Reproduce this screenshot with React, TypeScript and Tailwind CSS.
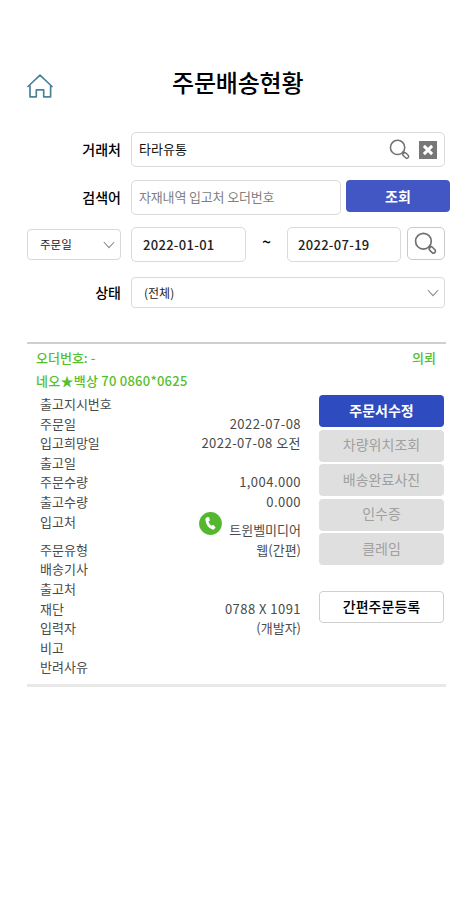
import React from 'react';
import clsx from 'clsx';

interface DetailRow {
  label: string;
  value?: string;
  numeric?: boolean;
  phone?: boolean;
}

const rows: DetailRow[] = [
  { label: '출고지시번호' },
  { label: '주문일', value: '2022-07-08', numeric: true },
  { label: '입고희망일', value: '2022-07-08 오전', numeric: true },
  { label: '출고일' },
  { label: '주문수량', value: '1,004.000', numeric: true },
  { label: '출고수량', value: '0.000', numeric: true },
  { label: '입고처', value: '트윈벨미디어', phone: true },
  { label: '주문유형', value: '웹(간편)' },
  { label: '배송기사' },
  { label: '출고처' },
  { label: '재단', value: '0788 X 1091', numeric: true },
  { label: '입력자', value: '(개발자)' },
  { label: '비고' },
  { label: '반려사유' },
];

const disabledActions = ['차량위치조회', '배송완료사진', '인수증', '클레임'];

const HomeIcon = () => (
  <svg className="w-[26px] h-[24px]" viewBox="0 0 26 24" fill="none" stroke="#4b839c" strokeWidth="1.7" strokeLinejoin="round" strokeLinecap="round">
    <path d="M1 12.5 13 1.2 25 12.5M3 11.5V22.8H9.3V15.8H16.7V22.8H23.6V11.5" />
  </svg>
);

const SearchIcon = ({ className }: { className: string }) => (
  <svg className={className} viewBox="0 0 22 22" fill="none" stroke="#707070" strokeLinecap="round">
    <circle cx="9" cy="8.8" r="7.5" strokeWidth="1.6" />
    <path d="M14.4 14 15.4 15" strokeWidth="1.7" />
    <rect x="-3.4" y="-1.9" width="6.8" height="3.8" rx="1.7" strokeWidth="1.5" transform="translate(17.5 17.2) rotate(45)" />
  </svg>
);

const ChevronIcon = () => (
  <svg className="w-[12px] h-[8px]" viewBox="0 0 12 8" fill="none" stroke="#8c8c8c" strokeWidth="1.1">
    <path d="M.8 1 6 6.6 11.2 1" />
  </svg>
);

const PhoneIcon = () => (
  <svg className="w-[23px] h-[23px]" viewBox="0 0 23 23">
    <circle cx="11.5" cy="11.5" r="11.4" fill="#55b72f" />
    <path
      d="M7.4 5.4 9.3 4.9Q9.9 4.8 10.1 5.4L10.9 8Q11 8.6 10.5 8.9L9.4 9.6Q10.2 12.2 12.3 13.7L13.5 13Q14 12.8 14.4 13.1L16.2 15Q16.6 15.5 16.2 16L15 17.3Q14.5 17.8 13.6 17.6Q7.4 15.6 6.4 8Q6.2 6 7.4 5.4Z"
      fill="#fff"
    />
  </svg>
);

const FieldLabel = ({ children }: { children: React.ReactNode }) => (
  <span className="mb-[2px] w-[94px] shrink-0 text-right text-[14px] font-medium leading-5">{children}</span>
);

export default function App() {
  return (
    <div className="h-[900px] w-[476px] bg-white pl-[27px] text-black font-['Noto_Sans_CJK_KR','Noto_Sans',sans-serif]">
      <header className="flex h-[132px] items-start pt-[66px]">
        <div className="mt-[8px] w-[145px]">
          <HomeIcon />
        </div>
        <h1 className="text-[24px] font-medium leading-[32px] tracking-[-0.2px]">주문배송현황</h1>
      </header>

      <div className="flex flex-col">
        <div className="flex h-[35px] items-center gap-[10px]">
          <FieldLabel>거래처</FieldLabel>
          <div className="flex h-[35px] w-[314px] items-center rounded-[5px] border border-[#dadada] pl-[7px] pr-[7px]">
            <span className="mb-[2px] flex-1 text-[13px] font-normal text-[#111]">타라유통</span>
            <SearchIcon className="mr-[9px] h-[21px] w-[21px]" />
            <svg className="h-[18px] w-[18px]" viewBox="0 0 18 18">
              <rect width="18" height="18" fill="#777" />
              <path d="M4.9 4.9 13.1 13.1M13.1 4.9 4.9 13.1" stroke="#fff" strokeWidth="3" />
            </svg>
          </div>
        </div>

        <div className="mt-[13px] flex h-[35px] items-center">
          <FieldLabel>검색어</FieldLabel>
          <div className="ml-[10px] flex h-[35px] w-[210px] items-center rounded-[5px] border border-[#dadada] pb-[2px] pl-[7px] text-[13px] tracking-[-0.15px] text-[#808080]">
            자재내역 입고처 오더번호
          </div>
          <button className="mb-[3px] ml-[5px] h-[32px] w-[104px] rounded-[4px] bg-[#4257c4] text-[14px] font-bold leading-[29px] text-white">
            조회
          </button>
        </div>

        <div className="mt-[12px] flex h-[35px] items-start">
          <div className="mt-[2px] flex h-[31px] w-[94px] items-center justify-between rounded-[4px] border border-[#d8d8d8] pl-[12px] pr-[5px] text-[11.5px] text-[#222]">
            주문일
            <ChevronIcon />
          </div>
          <div className="ml-[10px] flex h-[35px] w-[115px] items-center rounded-[5px] border border-[#dadada] pl-[11px] text-[13px] font-medium tracking-[0.3px] text-[#222]">
            2022-01-01
          </div>
          <span className="w-[41px] text-center text-[16px] font-medium leading-[28px]">~</span>
          <div className="flex h-[35px] w-[114px] items-center rounded-[5px] border border-[#dadada] pl-[10px] text-[13px] font-medium tracking-[0.3px] text-[#222]">
            2022-07-19
          </div>
          <button className="ml-[6px] flex h-[33px] w-[38px] items-center justify-center rounded-[5px] border border-[#cacaca] pr-[2px]">
            <SearchIcon className="h-[23px] w-[23px]" />
          </button>
        </div>

        <div className="mt-[15px] flex h-[31px] items-center gap-[10px]">
          <FieldLabel>상태</FieldLabel>
          <div className="flex h-[31px] w-[314px] items-center justify-between rounded-[4px] border border-[#dadada] pl-[12px] pr-[5px] text-[12px] text-[#222]">
            (전체)
            <ChevronIcon />
          </div>
        </div>
      </div>

      <section className="mt-[34px] w-[419px] border-b-[3px] border-t-2 border-b-[#e8e8e8] border-t-[#cfcfcf] pb-[7px] pt-[2px]">
        <div className="flex justify-between pl-[9px] pr-[10px] text-[13px] font-medium leading-[23px] text-[#54c02c]">
          <span>오더번호: -</span>
          <span>의뢰</span>
        </div>
        <div className="pl-[9px] text-[13px] font-medium leading-[23px] tracking-[0.25px] text-[#54c02c]">
          네오★백상 70 0860*0625
        </div>

        <div className="flex pl-[13px]">
          <div className="mt-[2px] w-[261px] text-[13px] leading-[19.6px] text-[#4a4a4a]">
            {rows.map((row) => (
              <div key={row.label} className={clsx('flex justify-between', row.phone ? 'h-[28.2px]' : 'h-[19.6px]')}>
                <span>{row.label}</span>
                {row.phone ? (
                  <span className="flex items-start">
                    <PhoneIcon />
                    <span className="ml-[7px] mt-[8px]">{row.value}</span>
                  </span>
                ) : (
                  <span className={clsx(row.numeric && 'tracking-[0.46px]')}>{row.value}</span>
                )}
              </div>
            ))}
          </div>

          <div className="ml-[18px] flex w-[125px] flex-col">
            <button className="mt-[3px] h-[32px] rounded-[4px] bg-[#2f4bc0] text-[14px] font-bold leading-[28px] text-white">
              <span className="block pb-[2px]">주문서수정</span>
            </button>
            {disabledActions.map((action) => (
              <button key={action} className="mt-[2.5px] h-[32px] rounded-[4px] bg-[#dfdfdf] text-[14px] leading-[28px] text-[#a0a0a0]">
                <span className="block pb-[3px]">{action}</span>
              </button>
            ))}
            <button className="mt-[26px] h-[32px] rounded-[4px] border border-[#cfcfcf] text-[14px] font-medium leading-[28px]">
              <span className="block pb-[2px]">간편주문등록</span>
            </button>
          </div>
        </div>
      </section>
    </div>
  );
}
